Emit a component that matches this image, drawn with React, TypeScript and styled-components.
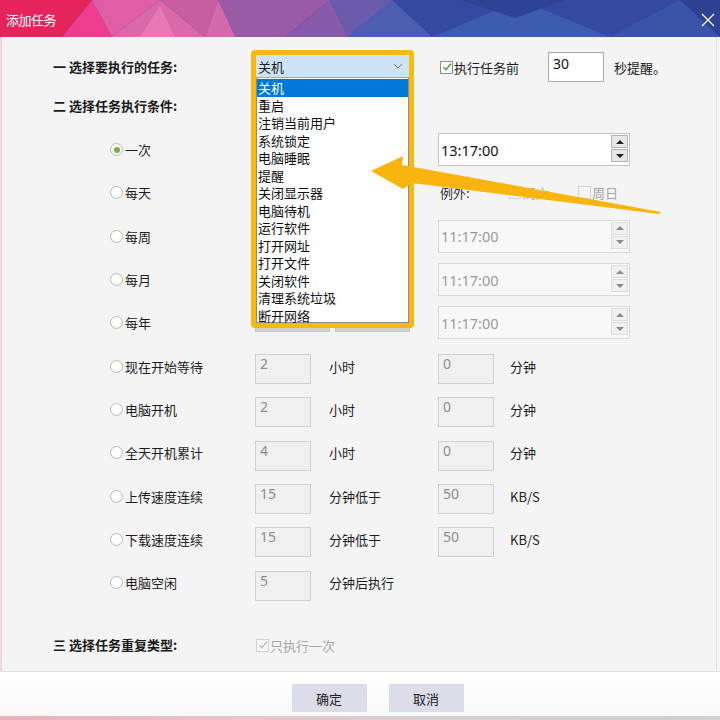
import React from 'react';
import styled, { createGlobalStyle } from 'styled-components';

const GlobalStyle = createGlobalStyle`
  html, body { margin: 0; padding: 0; width: 720px; height: 720px; overflow: hidden; background: #f4f4f4; }
  body { font-family: "Noto Sans", "Noto Sans CJK SC", sans-serif; font-size: 13px; color: #1e1e1e; }
  * { box-sizing: border-box; }
`;

const Window = styled.div`
  position: relative;
  width: 720px;
  height: 720px;
  display: flex;
  flex-direction: column;
  background: #f4f4f4;
  overflow: hidden;
`;

const TitleBar = styled.div`
  position: relative;
  height: 37px;
  flex: 0 0 37px;
  display: flex;
  align-items: center;
  justify-content: space-between;
  padding: 0 4px 0 6px;
  color: #fff;
  border-bottom: 1px solid #e9dfe6;
`;

const TitleArt = styled.svg`
  position: absolute;
  inset: 0;
  z-index: 0;
`;

const TitleText = styled.span`
  position: relative;
  z-index: 1;
  font-family: "Noto Sans CJK SC", sans-serif;
  font-size: 13px;
  letter-spacing: -0.5px;
  margin-top: 3px;
`;

const CloseBtn = styled.span`
  position: relative;
  z-index: 1;
  width: 16px;
  height: 16px;
  display: flex;
  margin-top: 3px;
`;

const Body = styled.div`
  flex: 1;
  display: flex;
  flex-direction: column;
  padding-top: 15px;
  box-shadow: inset 2px 0 0 #efd6dc, inset -3px 0 0 #f4f4f4, inset -4px 0 0 #dddddd;
`;

const TopRow = styled.div`
  display: flex;
  align-items: center;
  height: 30px;
  padding-left: 53px;
`;

const Heading = styled.div`
  font-family: "Noto Sans CJK SC", sans-serif;
  font-weight: bold;
  font-size: 13px;
  line-height: 20px;
  width: 203px;
  flex: 0 0 203px;
  color: #1a1a1a;
`;

const ComboWrap = styled.div`
  position: relative;
  width: 153px;
  height: 23px;
  flex: 0 0 153px;
  align-self: flex-start;
  margin-top: 3px;
`;

const ComboBox = styled.div`
  height: 23px;
  background: #cde4f6;
  border-bottom: 1px solid #7fb0dc;
  display: flex;
  align-items: center;
  padding-left: 2px;
  padding-right: 6px;
  justify-content: space-between;
  font-family: "Noto Sans CJK SC", sans-serif;
  font-size: 13px;
`;

const ListBox = styled.div`
  position: absolute;
  top: 23px;
  left: 0;
  width: 153px;
  height: 245px;
  background: #fff;
  border: 1px solid #8c8c8c;
  border-top: none;
  z-index: 5;
  padding-top: 1px;
`;

const ListItem = styled.div<{ $selected?: boolean }>`
  height: 17.5px;
  line-height: 17.5px;
  padding-left: 1px;
  font-family: "Noto Sans CJK SC", sans-serif;
  font-size: 13px;
  background: ${p => (p.$selected ? '#0078d7' : 'transparent')};
  color: ${p => (p.$selected ? '#ffffff' : '#111')};
  white-space: nowrap;
`;

const HighlightFrame = styled.div`
  position: absolute;
  left: -5px;
  top: -5px;
  width: 163px;
  height: 278px;
  border: 5px solid #fbb80f;
  border-radius: 4px;
  z-index: 6;
  pointer-events: none;
`;

const CheckItem = styled.label<{ $width?: number; $disabled?: boolean }>`
  display: inline-flex;
  align-items: center;
  gap: 1px;
  font-family: "Noto Sans CJK SC", sans-serif;
  font-size: 13px;
  color: ${p => (p.$disabled ? '#a6a6a6' : '#1e1e1e')};
  width: ${p => (p.$width ? `${p.$width}px` : 'auto')};
  flex: 0 0 auto;
`;

const Box = styled.span<{ $disabled?: boolean }>`
  width: 13px;
  height: 13px;
  border: 1px solid ${p => (p.$disabled ? '#d2d2d2' : '#8f8f8f')};
  background: ${p => (p.$disabled ? '#f6f6f6' : '#fff')};
  display: inline-flex;
  align-items: center;
  justify-content: center;
  flex: 0 0 13px;
`;

const TextInput = styled.div<{ $w: number; $h: number; $disabled?: boolean }>`
  width: ${p => p.$w}px;
  height: ${p => p.$h}px;
  border: 1px solid ${p => (p.$disabled ? '#d0d0d0' : '#a9a9a9')};
  background: ${p => (p.$disabled ? '#f0f0f0' : '#ffffff')};
  color: ${p => (p.$disabled ? '#8d8d8d' : '#111')};
  font-size: 14px;
  line-height: 16px;
  padding: ${p => (p.$disabled ? '1px 4px' : '3px 4px')};
  flex: 0 0 auto;
`;

const SuffixText = styled.span<{ $ml?: number }>`
  font-family: "Noto Sans CJK SC", sans-serif;
  font-size: 13px;
  margin-left: ${p => p.$ml ?? 0}px;
  color: #1e1e1e;
`;

const SubHeading = styled(Heading)`
  margin-top: 14px;
  padding-left: 53px;
  width: auto;
  flex: none;
`;

const Conditions = styled.div`
  margin-top: 12px;
  padding-left: 110px;
  display: flex;
  flex-direction: column;
`;

const Row = styled.div`
  display: grid;
  grid-template-columns: 145px 74px 109px 72px 1fr;
  height: 43.3px;
  align-items: center;
`;

const RadioItem = styled.label`
  display: inline-flex;
  align-items: center;
  gap: 2px;
  font-family: "Noto Sans CJK SC", sans-serif;
  font-size: 13px;
  color: #1e1e1e;
`;

const RadioCircle = styled.span<{ $checked?: boolean }>`
  width: 13px;
  height: 13px;
  border-radius: 50%;
  border: 1px solid #bdbdbd;
  background: radial-gradient(circle at 50% 40%, #ffffff 40%, #ececec 100%);
  display: inline-flex;
  align-items: center;
  justify-content: center;
  &::after {
    content: '';
    display: ${p => (p.$checked ? 'block' : 'none')};
    width: 6px;
    height: 6px;
    border-radius: 50%;
    background: #72b43a;
  }
`;

const LabelCell = styled.span<{ $col: number }>`
  grid-column: ${p => p.$col};
  font-family: "Noto Sans CJK SC", sans-serif;
  font-size: 13px;
  color: #1e1e1e;
`;

const InputCell = styled.div<{ $col: number }>`
  grid-column: ${p => p.$col};
  display: flex;
  align-items: center;
  transform: translateY(3px);
`;

const TimeField = styled.div<{ $disabled?: boolean }>`
  grid-column: 4 / 6;
  width: 192px;
  height: 33px;
  border: 1px solid ${p => (p.$disabled ? '#d9d9d9' : '#c4c4c4')};
  background: ${p => (p.$disabled ? '#f8f8f8' : '#ffffff')};
  color: ${p => (p.$disabled ? '#9a9a9a' : '#111')};
  display: flex;
  align-items: center;
  padding-left: 2px;
  font-size: 14.5px;
`;

const Spinner = styled.div`
  margin-left: auto;
  margin-right: 1px;
  display: flex;
  flex-direction: column;
  gap: 1px;
  margin-top: -2px;
`;

const SpinBtn = styled.div<{ $disabled?: boolean; $down?: boolean }>`
  width: 17px;
  height: 13px;
  border: 1px solid ${p => (p.$disabled ? '#dddddd' : '#b3b3b3')};
  background: ${p => (p.$disabled ? '#f0f0f0' : '#e7e7e7')};
  display: flex;
  align-items: center;
  justify-content: center;
  &::after {
    content: '';
    width: 0;
    height: 0;
    border-left: 4px solid transparent;
    border-right: 4px solid transparent;
    ${p =>
      p.$down
        ? `border-top: 4px solid ${p.$disabled ? '#8a8a8a' : '#222'};`
        : `border-bottom: 4px solid ${p.$disabled ? '#8a8a8a' : '#222'};`}
  }
`;

const ExceptCell = styled.div`
  grid-column: 4 / 6;
  display: flex;
  align-items: center;
`;

const ExceptLabel = styled.span`
  width: 71px;
  padding-left: 2px;
  font-family: "Noto Sans CJK SC", sans-serif;
  font-size: 13px;
  color: #333;
`;

const DateFields = styled.div`
  grid-column: 2 / 4;
  align-self: start;
  margin-top: 8px;
  display: flex;
  gap: 5px;
`;

const DateBox = styled.div`
  width: 75px;
  height: 23px;
  background: #d2d2d2;
  border: 1px solid #c4c4c4;
`;

const BottomRow = styled.div`
  margin-top: 31px;
  display: flex;
  align-items: center;
  padding-left: 53px;
`;

const Footer = styled.div`
  height: 45px;
  flex: 0 0 45px;
  border-top: 1px solid #e0e0e0;
  background: linear-gradient(#ffffff, #f8f8f8);
  display: flex;
  justify-content: center;
  align-items: flex-start;
  gap: 22px;
  padding-top: 12px;
  padding-left: 35px;
`;

const Button = styled.button`
  width: 75px;
  height: 28px;
  border: none;
  background: #dcdde8;
  font-family: "Noto Sans CJK SC", sans-serif;
  font-size: 13px;
  color: #222;
  padding: 0;
`;

const BottomStrip = styled.div`
  height: 4px;
  flex: 0 0 4px;
  background: linear-gradient(90deg, #eab0bc 0%, #e9c2ca 30%, #d6d0d2 60%, #cfcfcf 100%);
`;

const ArrowOverlay = styled.svg`
  position: absolute;
  left: 0;
  top: 0;
  z-index: 10;
  pointer-events: none;
`;

const Check: React.FC<{ disabled?: boolean }> = ({ disabled }) => (
  <svg width="10" height="10" viewBox="0 0 10 10">
    <path d="M1.5 5.2 L4 7.8 L8.8 1.8" fill="none" stroke={disabled ? '#bdbdbd' : '#3f9a3a'} strokeWidth="1.4" />
  </svg>
);

const Radio: React.FC<{ label: string; checked?: boolean }> = ({ label, checked }) => (
  <RadioItem>
    <RadioCircle $checked={checked} />
    {label}
  </RadioItem>
);

const Time: React.FC<{ value: string; disabled?: boolean }> = ({ value, disabled }) => (
  <TimeField $disabled={disabled}>
    {value}
    <Spinner>
      <SpinBtn $disabled={disabled} />
      <SpinBtn $disabled={disabled} $down />
    </Spinner>
  </TimeField>
);

const tasks = ['关机', '重启', '注销当前用户', '系统锁定', '电脑睡眠', '提醒', '关闭显示器', '电脑待机', '运行软件', '打开网址', '打开文件', '关闭软件', '清理系统垃圾', '断开网络'];

const numberRows = [
  { label: '现在开始等待', a: '2', unitA: '小时', b: '0', unitB: '分钟' },
  { label: '电脑开机', a: '2', unitA: '小时', b: '0', unitB: '分钟' },
  { label: '全天开机累计', a: '4', unitA: '小时', b: '0', unitB: '分钟' },
  { label: '上传速度连续', a: '15', unitA: '分钟低于', b: '50', unitB: 'KB/S' },
  { label: '下载速度连续', a: '15', unitA: '分钟低于', b: '50', unitB: 'KB/S' },
];

export default function App() {
  return (
    <>
      <GlobalStyle />
      <Window>
        <TitleBar>
          <TitleArt width="720" height="37" viewBox="0 0 720 37" preserveAspectRatio="none">
            <rect x="0" y="0" width="720" height="37" fill="#3649a0" />
            <polygon points="0,0 92,0 62,37 0,37" fill="#e4245a" />
            <polygon points="62,37 92,0 112,37" fill="#ef3d8d" />
            <polygon points="92,0 160,0 112,37" fill="#df5ea6" />
            <polygon points="112,37 160,0 205,37" fill="#d96aaa" />
            <polygon points="140,37 160,6 175,37" fill="#e77ab6" />
            <polygon points="160,0 218,0 205,37" fill="#c75ea2" />
            <polygon points="205,37 218,0 240,37" fill="#d46aac" />
            <polygon points="218,0 330,0 285,37 235,37" fill="#995aa6" />
            <polygon points="285,37 330,0 348,37" fill="#865aa9" />
            <polygon points="330,0 392,0 348,37" fill="#6b5bad" />
            <polygon points="348,37 392,0 432,37" fill="#4d5eb1" />
            <polygon points="432,37 520,0 610,37" fill="#3d5cb0" />
            <polygon points="460,0 565,0 515,18" fill="#2f4396" />
            <polygon points="610,37 680,0 720,37" fill="#3a55a8" />
            <polygon points="680,0 720,0 720,37" fill="#2d4092" />
          </TitleArt>
          <TitleText>添加任务</TitleText>
          <CloseBtn>
            <svg width="16" height="16" viewBox="0 0 16 16">
              <path d="M2 2 L14 14 M14 2 L2 14" stroke="#ffffff" strokeWidth="1.2" fill="none" />
            </svg>
          </CloseBtn>
        </TitleBar>

        <Body>
          <TopRow>
            <Heading>一 选择要执行的任务:</Heading>
            <ComboWrap>
              <ComboBox>
                <span>关机</span>
                <svg width="10" height="6" viewBox="0 0 10 6">
                  <path d="M1 1 L5 5 L9 1" fill="none" stroke="#7a7a7a" strokeWidth="1" />
                </svg>
              </ComboBox>
              <ListBox>
                {tasks.map((t, i) => (
                  <ListItem key={t} $selected={i === 0}>{t}</ListItem>
                ))}
              </ListBox>
              <HighlightFrame />
            </ComboWrap>
            <CheckItem $width={108} style={{ marginLeft: 31 }}>
              <Box><Check /></Box>
              执行任务前
            </CheckItem>
            <TextInput $w={56} $h={30}>30</TextInput>
            <SuffixText $ml={10}>秒提醒。</SuffixText>
          </TopRow>

          <SubHeading>二 选择任务执行条件:</SubHeading>

          <Conditions>
            <Row>
              <Radio label="一次" checked />
              <Time value="13:17:00" />
            </Row>
            <Row>
              <Radio label="每天" />
              <ExceptCell>
                <ExceptLabel>例外:</ExceptLabel>
                <CheckItem $width={69} $disabled>
                  <Box $disabled />
                  周六
                </CheckItem>
                <CheckItem $disabled>
                  <Box $disabled />
                  周日
                </CheckItem>
              </ExceptCell>
            </Row>
            <Row>
              <Radio label="每周" />
              <Time value="11:17:00" disabled />
            </Row>
            <Row>
              <Radio label="每月" />
              <Time value="11:17:00" disabled />
            </Row>
            <Row>
              <Radio label="每年" />
              <DateFields>
                <DateBox />
                <DateBox />
              </DateFields>
              <Time value="11:17:00" disabled />
            </Row>
            {numberRows.map(r => (
              <Row key={r.label}>
                <Radio label={r.label} />
                <InputCell $col={2}>
                  <TextInput $w={56} $h={30} $disabled>{r.a}</TextInput>
                </InputCell>
                <LabelCell $col={3}>{r.unitA}</LabelCell>
                <InputCell $col={4}>
                  <TextInput $w={56} $h={30} $disabled>{r.b}</TextInput>
                </InputCell>
                <LabelCell $col={5}>{r.unitB}</LabelCell>
              </Row>
            ))}
            <Row>
              <Radio label="电脑空闲" />
              <InputCell $col={2}>
                <TextInput $w={56} $h={30} $disabled>5</TextInput>
              </InputCell>
              <LabelCell $col={3}>分钟后执行</LabelCell>
            </Row>
          </Conditions>

          <BottomRow>
            <Heading>三 选择任务重复类型:</Heading>
            <CheckItem $disabled>
              <Box $disabled><Check disabled /></Box>
              只执行一次
            </CheckItem>
          </BottomRow>
        </Body>

        <Footer>
          <Button>确定</Button>
          <Button>取消</Button>
        </Footer>
        <BottomStrip />

        <ArrowOverlay width="720" height="720" viewBox="0 0 720 720">
          <polygon points="371,171 403,156 402,165 661,212 659,214 412,183 403,189" fill="#f9b50e" />
        </ArrowOverlay>
      </Window>
    </>
  );
}
